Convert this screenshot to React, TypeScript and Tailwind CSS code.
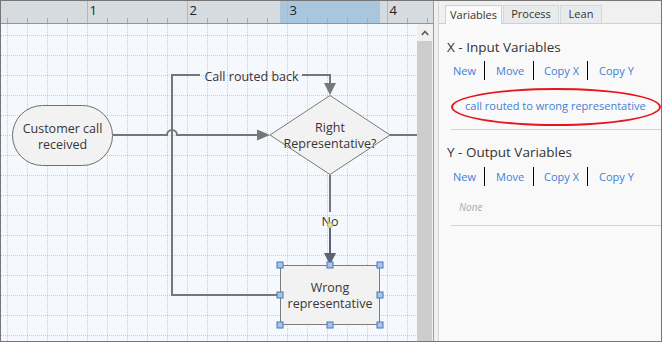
import React from 'react'

const LINE = '#777777'
const SEL = '#5e6274'
const GRID = '#cbd0d5'

const handles: [number, number][] = [
  [280, 265], [330, 265], [380, 265],
  [280, 295], [380, 295],
  [280, 325], [330, 325], [380, 325],
]

function Ruler() {
  const ticks = Array.from({ length: 22 }, (_, i) => 7 + i * 20)
  return (
    <div className="h-[23px] border-b border-[#8e949a] bg-[#d6dbe0]">
      <svg width="432" height="22" viewBox="1 1 432 22" className="block">
        <rect x="280" y="1" width="100" height="22" fill="#aac5de" />
        {ticks.map((x) =>
          (x - 87) % 100 === 0 ? (
            <line key={x} x1={x + 0.5} y1={1} x2={x + 0.5} y2={23} stroke="#b3b8be" />
          ) : (
            <line key={x} x1={x + 0.5} y1={18} x2={x + 0.5} y2={23} stroke="#a6abb1" />
          )
        )}
        {[1, 2, 3, 4].map((n) => (
          <text key={n} x={n * 100 - 10.5} y={15} fontSize="13" fill="#222">
            {n}
          </text>
        ))}
      </svg>
    </div>
  )
}

function Canvas() {
  const vLines = Array.from({ length: 21 }, (_, i) => 7 + i * 20)
  const hLines = Array.from({ length: 16 }, (_, i) => 35 + i * 20)
  return (
    <svg width="416" height="317" viewBox="1 24 416 317" className="block" fontSize="12.5" fill="#363636">
      <rect x="1" y="24" width="416" height="317" fill="#f5f9fd" />
      {vLines.map((x) => (
        <line key={'v' + x} x1={x + 0.5} y1={24} x2={x + 0.5} y2={341} stroke={GRID} strokeDasharray="1 1" />
      ))}
      {hLines.map((y) => (
        <line key={'h' + y} x1={1} y1={y + 0.5} x2={417} y2={y + 0.5} stroke={GRID} strokeDasharray="1 1" />
      ))}

      {/* connectors */}
      <path d="M113 135 H167 A5 5 0 0 1 177 135 H259" stroke={LINE} strokeWidth="2" fill="none" />
      <polygon points="257,129.5 270,135 257,140.5" fill={LINE} />
      <path d="M390 135 H417" stroke={LINE} strokeWidth="2" fill="none" />
      <path d="M280 295 H172 V75 H200" stroke={LINE} strokeWidth="2" fill="none" />
      <path d="M302 75 H330 V85" stroke={LINE} strokeWidth="2" fill="none" />
      <polygon points="324,83 336,83 330,95" fill={LINE} />
      <path d="M330 175 V212" stroke={LINE} strokeWidth="2" fill="none" />
      <path d="M330 228 V255" stroke={SEL} strokeWidth="2" fill="none" />
      <polygon points="324,253 336,253 330,265" fill={SEL} />

      {/* shapes */}
      <rect x="12.5" y="105.5" width="100" height="60" rx="30" fill="#f2f2f2" stroke="#6f6f6f" />
      <polygon points="270,135 330,95.5 390,135 330,174.5" fill="#f2f2f2" stroke="#7a7a7a" />
      <rect x="280.5" y="265.5" width="99" height="59" fill="#f2f2f2" stroke="#7c7c7c" />

      {/* labels */}
      <g textAnchor="middle">
        <text x="62.5" y="133">Customer call</text>
        <text x="62.5" y="149">received</text>
        <text x="251.5" y="80.5">Call routed back</text>
        <text x="330" y="131.5">Right</text>
        <text x="330" y="148">Representative?</text>
        <text x="330" y="226">No</text>
        <text x="330" y="291.5">Wrong</text>
        <text x="330" y="308">representative</text>
      </g>

      <circle cx="330" cy="225" r="2.5" fill="#ebe59c" stroke="#b8ae62" />

      {handles.map(([x, y]) => (
        <rect key={x + '-' + y} x={x - 3} y={y - 3} width="6" height="6" fill="#a9c3ea" stroke="#4676b6" />
      ))}
    </svg>
  )
}

function Scrollbar() {
  return (
    <div className="flex w-[16px] flex-col bg-[#f0f0f0]">
      <div className="flex h-[17px] w-[15px] items-center justify-center">
        <svg width="8" height="6" viewBox="0 0 8 6">
          <polyline points="0.8,5 4,1.5 7.2,5" fill="none" stroke="#5a5a5a" strokeWidth="1.6" />
        </svg>
      </div>
      <div className="w-[15px] flex-1 bg-[#cdcdcd]" />
    </div>
  )
}

function ActionRow() {
  return (
    <div className="flex h-[19px] pl-[6px] text-[11px] leading-[19px] text-[#3f7fd5]">
      <span className="w-[39px] pl-[8px]">New</span>
      <span className="w-[1px] bg-black" />
      <span className="w-[48px] pl-[11px]">Move</span>
      <span className="w-[1px] bg-black" />
      <span className="w-[53px] pl-[10px]">Copy X</span>
      <span className="w-[1px] bg-black" />
      <span className="pl-[11px]">Copy Y</span>
    </div>
  )
}

function Panel() {
  return (
    <div className="flex w-[223px] flex-col border-l border-[#d4d4d4] bg-[#f9f9f9]">
      <div className="flex h-[23px] items-end gap-[1px] border-b border-[#cdd1d5] bg-[#f0f0f0] pl-[6px] text-[11px] text-[#333]">
        <div className="relative -mb-px flex h-[19px] w-[57px] items-center justify-center border border-b-0 border-[#cdd1d5] bg-[#fafafa]">
          Variables
        </div>
        <div className="flex h-[18px] w-[56px] items-center justify-center border border-b-0 border-[#d6d9dc] bg-[#e8eaec]">
          Process
        </div>
        <div className="flex h-[18px] w-[42px] items-center justify-center border border-b-0 border-[#d6d9dc] bg-[#e8eaec]">
          Lean
        </div>
      </div>

      <div className="mt-[13px] h-[20px] pl-[8px] text-[13.5px] leading-[20px] text-[#333]">X - Input Variables</div>
      <div className="mt-[4px]">
        <ActionRow />
      </div>
      <div className="relative mt-[16px] h-[20px] pl-[26px] text-[11px] leading-[20px] text-[#3f7fd5]">
        call routed to wrong representative
        <div className="absolute left-[12px] top-[-8px] h-[38px] w-[210px] rounded-[50%] border-2 border-[#e8141b]" />
      </div>
      <div className="ml-[12px] mt-[13px] border-t border-[#d6d6d6]" />

      <div className="mt-[12px] h-[20px] pl-[8px] text-[13.5px] leading-[20px] text-[#333]">Y - Output Variables</div>
      <div className="mt-[5px]">
        <ActionRow />
      </div>
      <div className="mt-[13px] h-[16px] pl-[20px] text-[10px] italic leading-[16px] text-[#aaaaaa]">None</div>
      <div className="ml-[12px] mt-[10px] border-t border-[#d6d6d6]" />
    </div>
  )
}

export default function App() {
  return (
    <div className="flex h-[342px] w-[662px] border border-[#767676] bg-[#f0f0f0] font-['Open_Sans',sans-serif]">
      <div className="flex w-[432px] flex-col">
        <Ruler />
        <div className="flex flex-1">
          <Canvas />
          <Scrollbar />
        </div>
      </div>
      <div className="w-[1px] bg-[#9c9c9c]" />
      <div className="w-[4px] bg-[#f0f0f0]" />
      <Panel />
    </div>
  )
}
